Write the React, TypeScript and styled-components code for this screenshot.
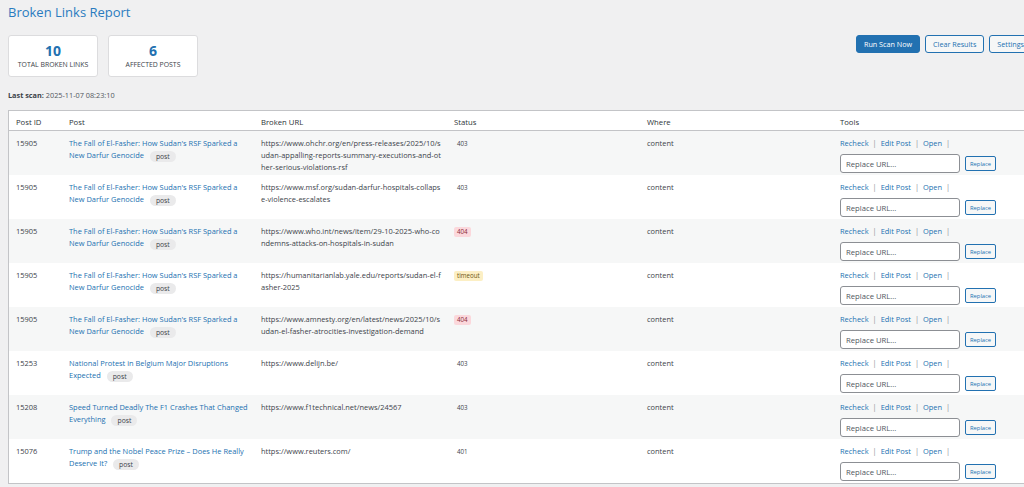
import React from 'react'
import styled, { createGlobalStyle } from 'styled-components'

const GlobalStyle = createGlobalStyle`
  html, body {
    margin: 0;
    padding: 0;
    background: #f0f0f1;
    overflow: hidden;
  }
  body {
    font-family: "Open Sans", "Noto Sans", sans-serif;
    color: #3c434a;
  }
`

const Page = styled.div`
  width: 1024px;
  padding: 0 0 0 8px;
`

const Title = styled.h1`
  margin: 0;
  padding-top: 2px;
  font-size: 13px;
  font-weight: 400;
  line-height: 20px;
  color: #2a7bbf;
`

const TopBar = styled.div`
  display: flex;
  justify-content: space-between;
  align-items: flex-start;
  margin-top: 13px;
`

const Cards = styled.div`
  display: flex;
  gap: 10px;
`

const StatCard = styled.div`
  width: 88px;
  height: 40px;
  background: #fff;
  border: 1px solid #dcdcde;
  border-radius: 3px;
  display: flex;
  flex-direction: column;
  align-items: center;
  justify-content: center;
`

const StatNumber = styled.div`
  font-size: 14px;
  font-weight: 700;
  line-height: 16px;
  color: #2271b1;
`

const StatLabel = styled.div`
  font-size: 6.9px;
  line-height: 9px;
  text-transform: uppercase;
  color: #3c434a;
  margin-top: 1px;
`

const Actions = styled.div`
  display: flex;
  gap: 5px;
`

const Button = styled.button<{ $primary?: boolean }>`
  height: 18px;
  padding: 0 7px;
  font-family: inherit;
  font-size: 7.2px;
  border-radius: 3px;
  border: 1px solid #2271b1;
  background: ${p => (p.$primary ? '#2271b1' : '#f6f7f7')};
  color: ${p => (p.$primary ? '#fff' : '#2271b1')};
  cursor: pointer;
`

const LastScan = styled.p`
  margin: 13px 0 0;
  font-size: 7.3px;
  line-height: 10px;
  color: #50575e;

  strong {
    color: #3c434a;
  }
`

const Table = styled.table`
  margin-top: 10px;
  width: 1020px;
  border-collapse: collapse;
  table-layout: fixed;
  background: #fff;
  border: 1px solid #c3c4c7;
  font-size: 7.45px;
  line-height: 12px;
`

const Th = styled.th<{ $w?: number }>`
  width: ${p => (p.$w ? `${p.$w - 10}px` : 'auto')};
  text-align: left;
  font-weight: 400;
  font-size: 7.7px;
  color: #2c3338;
  padding: 5px 3px 2px 7px;
  border-bottom: 1px solid #c3c4c7;
  height: 12px;
`

const Row = styled.tr`
  &:nth-child(odd) {
    background: #f6f7f7;
  }
`

const Td = styled.td`
  vertical-align: top;
  padding: 6px 3px 2px 7px;
  color: #3c434a;
`

const UrlCell = styled(Td)`
  word-break: break-all;
`

const PostLink = styled.a`
  color: #2271b1;
  text-decoration: none;
`

const Pill = styled.span`
  display: inline-block;
  margin-left: 6px;
  padding: 0 6px;
  line-height: 11px;
  font-size: 6.8px;
  border-radius: 7px;
  background: #eaeaeb;
  color: #3c434a;
  vertical-align: middle;
`

const Status = styled.span<{ $kind: string }>`
  display: inline-block;
  font-size: 6.2px;
  line-height: 10px;
  padding: 0 3px;
  border-radius: 2px;
  background: ${p => (p.$kind === '404' ? '#fbd8dc' : p.$kind === 'timeout' ? '#fcefc4' : 'transparent')};
  color: ${p => (p.$kind === '404' ? '#8a2d36' : p.$kind === 'timeout' ? '#6b5410' : '#3c434a')};
`

const ToolLinks = styled.div`
  color: #8c8f94;
  white-space: nowrap;

  a {
    color: #2271b1;
    text-decoration: none;
  }
`

const Sep = styled.span`
  margin: 0 4px;
`

const ReplaceRow = styled.div`
  display: flex;
  align-items: center;
  gap: 5px;
  margin-top: 5px;
`

const UrlInput = styled.input`
  box-sizing: border-box;
  width: 120px;
  height: 19px;
  padding: 0 5px;
  font-family: inherit;
  font-size: 7.7px;
  border: 1px solid #8c8f94;
  border-radius: 3px;
  background: #fff;

  &::placeholder {
    color: #50575e;
  }
`

const SmallButton = styled.button`
  height: 15px;
  padding: 0 4px;
  font-family: inherit;
  font-size: 5.8px;
  border: 1px solid #2271b1;
  border-radius: 2px;
  background: #f6f7f7;
  color: #2271b1;
`

type Link = { id: number; title: string; url: string; status: string }

const fasher = "The Fall of El-Fasher: How Sudan's RSF Sparked a New Darfur Genocide"

const links: Link[] = [
  { id: 15905, title: fasher, url: 'https://www.ohchr.org/en/press-releases/2025/10/sudan-appalling-reports-summary-executions-and-other-serious-violations-rsf', status: '403' },
  { id: 15905, title: fasher, url: 'https://www.msf.org/sudan-darfur-hospitals-collapse-violence-escalates', status: '403' },
  { id: 15905, title: fasher, url: 'https://www.who.int/news/item/29-10-2025-who-condemns-attacks-on-hospitals-in-sudan', status: '404' },
  { id: 15905, title: fasher, url: 'https://humanitarianlab.yale.edu/reports/sudan-el-fasher-2025', status: 'timeout' },
  { id: 15905, title: fasher, url: 'https://www.amnesty.org/en/latest/news/2025/10/sudan-el-fasher-atrocities-investigation-demand', status: '404' },
  { id: 15253, title: 'National Protest in Belgium Major Disruptions Expected', url: 'https://www.delijn.be/', status: '403' },
  { id: 15208, title: 'Speed Turned Deadly The F1 Crashes That Changed Everything', url: 'https://www.f1technical.net/news/24567', status: '403' },
  { id: 15076, title: 'Trump and the Nobel Peace Prize – Does He Really Deserve It?', url: 'https://www.reuters.com/', status: '401' },
]

export default function App() {
  return (
    <>
      <GlobalStyle />
      <Page>
        <Title>Broken Links Report</Title>
        <TopBar>
          <Cards>
            <StatCard>
              <StatNumber>10</StatNumber>
              <StatLabel>Total Broken Links</StatLabel>
            </StatCard>
            <StatCard>
              <StatNumber>6</StatNumber>
              <StatLabel>Affected Posts</StatLabel>
            </StatCard>
          </Cards>
          <Actions>
            <Button $primary>Run Scan Now</Button>
            <Button>Clear Results</Button>
            <Button>Settings</Button>
          </Actions>
        </TopBar>
        <LastScan>
          <strong>Last scan:</strong> 2025-11-07 08:23:10
        </LastScan>
        <Table>
          <thead>
            <tr>
              <Th $w={53}>Post ID</Th>
              <Th $w={192}>Post</Th>
              <Th $w={193}>Broken URL</Th>
              <Th $w={193}>Status</Th>
              <Th $w={193}>Where</Th>
              <Th>Tools</Th>
            </tr>
          </thead>
          <tbody>
            {links.map((l, i) => (
              <Row key={i}>
                <Td>{l.id}</Td>
                <Td>
                  <PostLink href="#">{l.title}</PostLink>
                  <Pill>post</Pill>
                </Td>
                <UrlCell>{l.url}</UrlCell>
                <Td>
                  <Status $kind={l.status}>{l.status}</Status>
                </Td>
                <Td>content</Td>
                <Td>
                  <ToolLinks>
                    <a href="#">Recheck</a>
                    <Sep>|</Sep>
                    <a href="#">Edit Post</a>
                    <Sep>|</Sep>
                    <a href="#">Open</a>
                    <Sep>|</Sep>
                  </ToolLinks>
                  <ReplaceRow>
                    <UrlInput placeholder="Replace URL..." />
                    <SmallButton>Replace</SmallButton>
                  </ReplaceRow>
                </Td>
              </Row>
            ))}
          </tbody>
        </Table>
      </Page>
    </>
  )
}
